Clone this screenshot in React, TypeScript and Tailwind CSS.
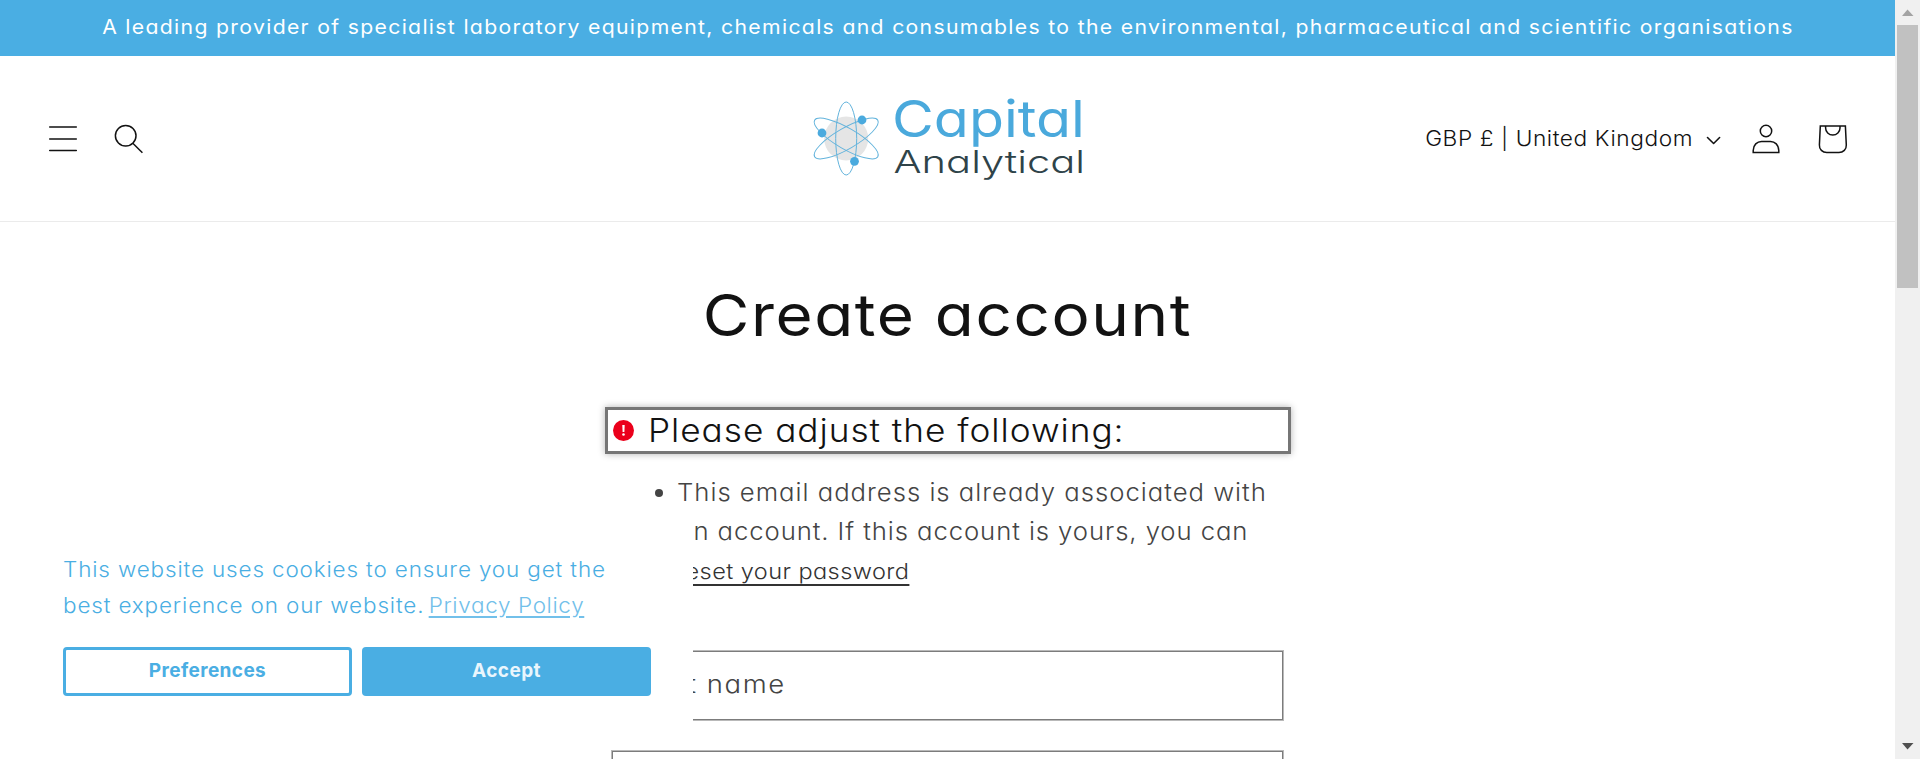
function MenuIcon() {
  return (
    <svg className="h-8 w-8" viewBox="47 123 32 32" fill="none" stroke="#121212" strokeWidth="1.5" strokeLinecap="round">
      <path d="M49.7 127.1H76.3M49.7 139H76.3M49.7 150.6H76.3" />
    </svg>
  );
}

function SearchIcon() {
  return (
    <svg className="h-8 w-8" viewBox="113 123 32 32" fill="none" stroke="#121212" strokeWidth="1.5">
      <circle cx="125.7" cy="135.7" r="10.3" />
      <path d="M132.8 143.2L142.4 152.8" />
    </svg>
  );
}

function ChevronIcon() {
  return (
    <svg className="h-8 w-4" viewBox="1706 123 16 32" fill="none" stroke="#121212" strokeWidth="1.6" strokeLinecap="round" strokeLinejoin="round">
      <path d="M1707.5 137.5L1713.6 143.5L1719.6 137.5" />
    </svg>
  );
}

function AccountIcon() {
  return (
    <svg className="h-8 w-8" viewBox="1750 123 32 32" fill="none" stroke="#121212" strokeWidth="1.5">
      <circle cx="1766" cy="131" r="5.7" />
      <path d="M1753.2 152.4V150.4C1753.2 145 1757.2 141.4 1761.5 141.4H1770.5C1774.8 141.4 1778.8 145 1778.8 150.4V152.4Z" />
    </svg>
  );
}

function BagIcon() {
  return (
    <svg className="h-8 w-8" viewBox="1817 123 32 32" fill="none" stroke="#121212" strokeWidth="1.5">
      <path d="M1820.3 126.1H1845.4L1846.3 144.9C1846.6 149.2 1843.2 152.6 1838.9 152.6H1826.8C1822.5 152.6 1819.1 149.2 1819.4 144.9Z" />
      <path d="M1825.6 126.1V127.9A7.2 7.2 0 0 0 1840 127.9V126.1" />
    </svg>
  );
}

function Logo() {
  return (
    <svg className="h-[95px] w-[285px] overflow-visible" viewBox="805.5 91 285 95">
      <circle cx="845.7" cy="138.5" r="22" fill="#e5e5e5" />
      <g fill="none" stroke="#62b3dc" strokeWidth="1">
        <ellipse cx="845.7" cy="138.5" rx="10.5" ry="36.5" />
        <ellipse cx="845.7" cy="138.5" rx="10.5" ry="36.5" transform="rotate(60 845.7 138.5)" />
        <ellipse cx="845.7" cy="138.5" rx="10.5" ry="36.5" transform="rotate(-60 845.7 138.5)" />
      </g>
      <g fill="#4aaade">
        <circle cx="821.5" cy="133" r="4.4" />
        <circle cx="861.5" cy="120" r="4.4" />
        <circle cx="854" cy="161.3" r="4.4" />
      </g>
      <text x="891.5" y="137" textLength="193" lengthAdjust="spacingAndGlyphs" className="font-['Inter',sans-serif] text-[51px] font-normal" fill="#4aa9dc">
        Capital
      </text>
      <text x="893" y="173.3" textLength="191.5" lengthAdjust="spacingAndGlyphs" className="font-['Inter',sans-serif] text-[31px] font-[350]" fill="#2f4349">
        Analytical
      </text>
    </svg>
  );
}

function Scrollbar() {
  return (
    <div className="flex h-full w-[25px] shrink-0 flex-col items-center bg-[#f0f0f0]">
      <svg className="h-[25px] w-[25px] shrink-0" viewBox="0 0 25 25">
        <path d="M12.5 9.5L18.5 16H7Z" fill="#a3a3a3" />
      </svg>
      <div className="h-[263px] w-[21px] bg-[#c1c1c1]" />
      <svg className="mt-auto h-[25px] w-[25px] shrink-0" viewBox="0 0 25 25">
        <path d="M7 9H18.5L12.5 15.5Z" fill="#505050" />
      </svg>
    </div>
  );
}

function CookieBanner() {
  return (
    <div className="absolute top-[519px] left-[31px] h-[209px] w-[662px] bg-white px-8 pt-[33px]">
      <p className="origin-left scale-x-[1.07] text-[21px] leading-9 font-light tracking-[0.8px] whitespace-nowrap text-[#4aaee3]">
        This website uses cookies to ensure you get the
        <br />
        best experience on our website.
        <a className="ml-[4px] tracking-[0.6px] text-[#72c0ea] underline decoration-2 underline-offset-[3px]">Privacy Policy</a>
      </p>
      <div className="mt-[23px] flex gap-[10px] text-[19px] font-bold tracking-[0.4px]">
        <button className="h-[49px] w-[289px] rounded-[4px] border-3 border-[#4aaee3] pb-px text-[#4aaee3]">Preferences</button>
        <button className="h-[49px] w-[289px] rounded-[4px] bg-[#4aaee3] pb-px text-[#e9f6fd]">Accept</button>
      </div>
    </div>
  );
}

export default function App() {
  return (
    <div className="relative flex h-[759px] w-[1920px] overflow-hidden bg-white font-['Inter',sans-serif] text-[#121212] [font-feature-settings:'cv11']">
      <div className="flex min-w-0 flex-1 flex-col">
        <div className="flex h-14 shrink-0 justify-center bg-[#4aaee3] text-[20px] leading-[54px] tracking-[1.25px] whitespace-nowrap text-white">
          <span className="scale-x-[1.06]">
            A leading provider of specialist laboratory equipment, chemicals and consumables to the environmental, pharmaceutical and scientific organisations
          </span>
        </div>

        <header className="grid h-[166px] shrink-0 grid-cols-[1fr_auto_1fr] items-center border-b border-[#ebebeb] pr-[46px] pl-[47px]">
          <div className="flex items-center gap-[34px]">
            <MenuIcon />
            <SearchIcon />
          </div>
          <Logo />
          <div className="flex items-center justify-end">
            <span className="mr-[13px] origin-right scale-x-[1.08] text-[21px] leading-8 font-light tracking-[0.54px] whitespace-nowrap">GBP £ | United Kingdom</span>
            <ChevronIcon />
            <span className="ml-7 flex gap-[35px]">
              <AccountIcon />
              <BagIcon />
            </span>
          </div>
        </header>

        <main className="mx-auto w-[673px]">
          <h1 className="mt-[58px] h-[70px] scale-x-110 text-center text-[58px] leading-[70px] font-[370] tracking-[1.4px] whitespace-nowrap">Create account</h1>

          <h2 className="-mx-[6px] mt-[57px] flex h-[47px] w-[686px] items-center border-3 border-[#767676] pl-[5px] shadow-[0_0_7px_rgba(0,0,0,0.3)]">
            <svg className="h-[21px] w-[21px]" viewBox="0 0 21 21">
              <circle cx="10.5" cy="10.5" r="10.5" fill="#eb001b" />
              <path d="M9.3 5H11.7L11.4 12H9.6Z" fill="#fff" />
              <circle cx="10.5" cy="14.5" r="1.3" fill="#fff" />
            </svg>
            <span className="ml-[14px] origin-left scale-x-110 text-[32px] leading-10 font-light tracking-[0.88px] whitespace-nowrap">Please adjust the following:</span>
          </h2>

          <ul className="mt-[19px] flex text-[24px] leading-[39px] font-light text-[#444]">
            <li className="flex whitespace-nowrap">
              <span className="mt-4 mr-[14px] ml-11 h-2 w-2 rounded-full bg-[#444]" />
              <span className="origin-left scale-x-[1.07]">
                <span className="tracking-[0.92px]">This email address is already associated with</span>
                <br />
                <span className="tracking-[0.86px]">an account. If this account is yours, you can</span>
                <br />
                <a className="text-[22px] tracking-[0.4px] text-[#333] underline decoration-2 underline-offset-[5px] [text-decoration-skip-ink:none]">reset your password</a>
              </span>
            </li>
          </ul>

          <div className="mt-[59px] h-[71px] border border-[#b9b9b9] pl-[23px] text-[25px] leading-[67px] font-light text-[#444] shadow-[inset_0_0_0_1px_#7c7c7c]">
            <span className="inline-block origin-left scale-x-110 tracking-[1.4px]">First name</span>
          </div>
          <div className="mt-[29px] h-[71px] border border-[#b9b9b9] shadow-[inset_0_0_0_1px_#7c7c7c]" />
        </main>
      </div>
      <Scrollbar />
      <CookieBanner />
    </div>
  );
}
